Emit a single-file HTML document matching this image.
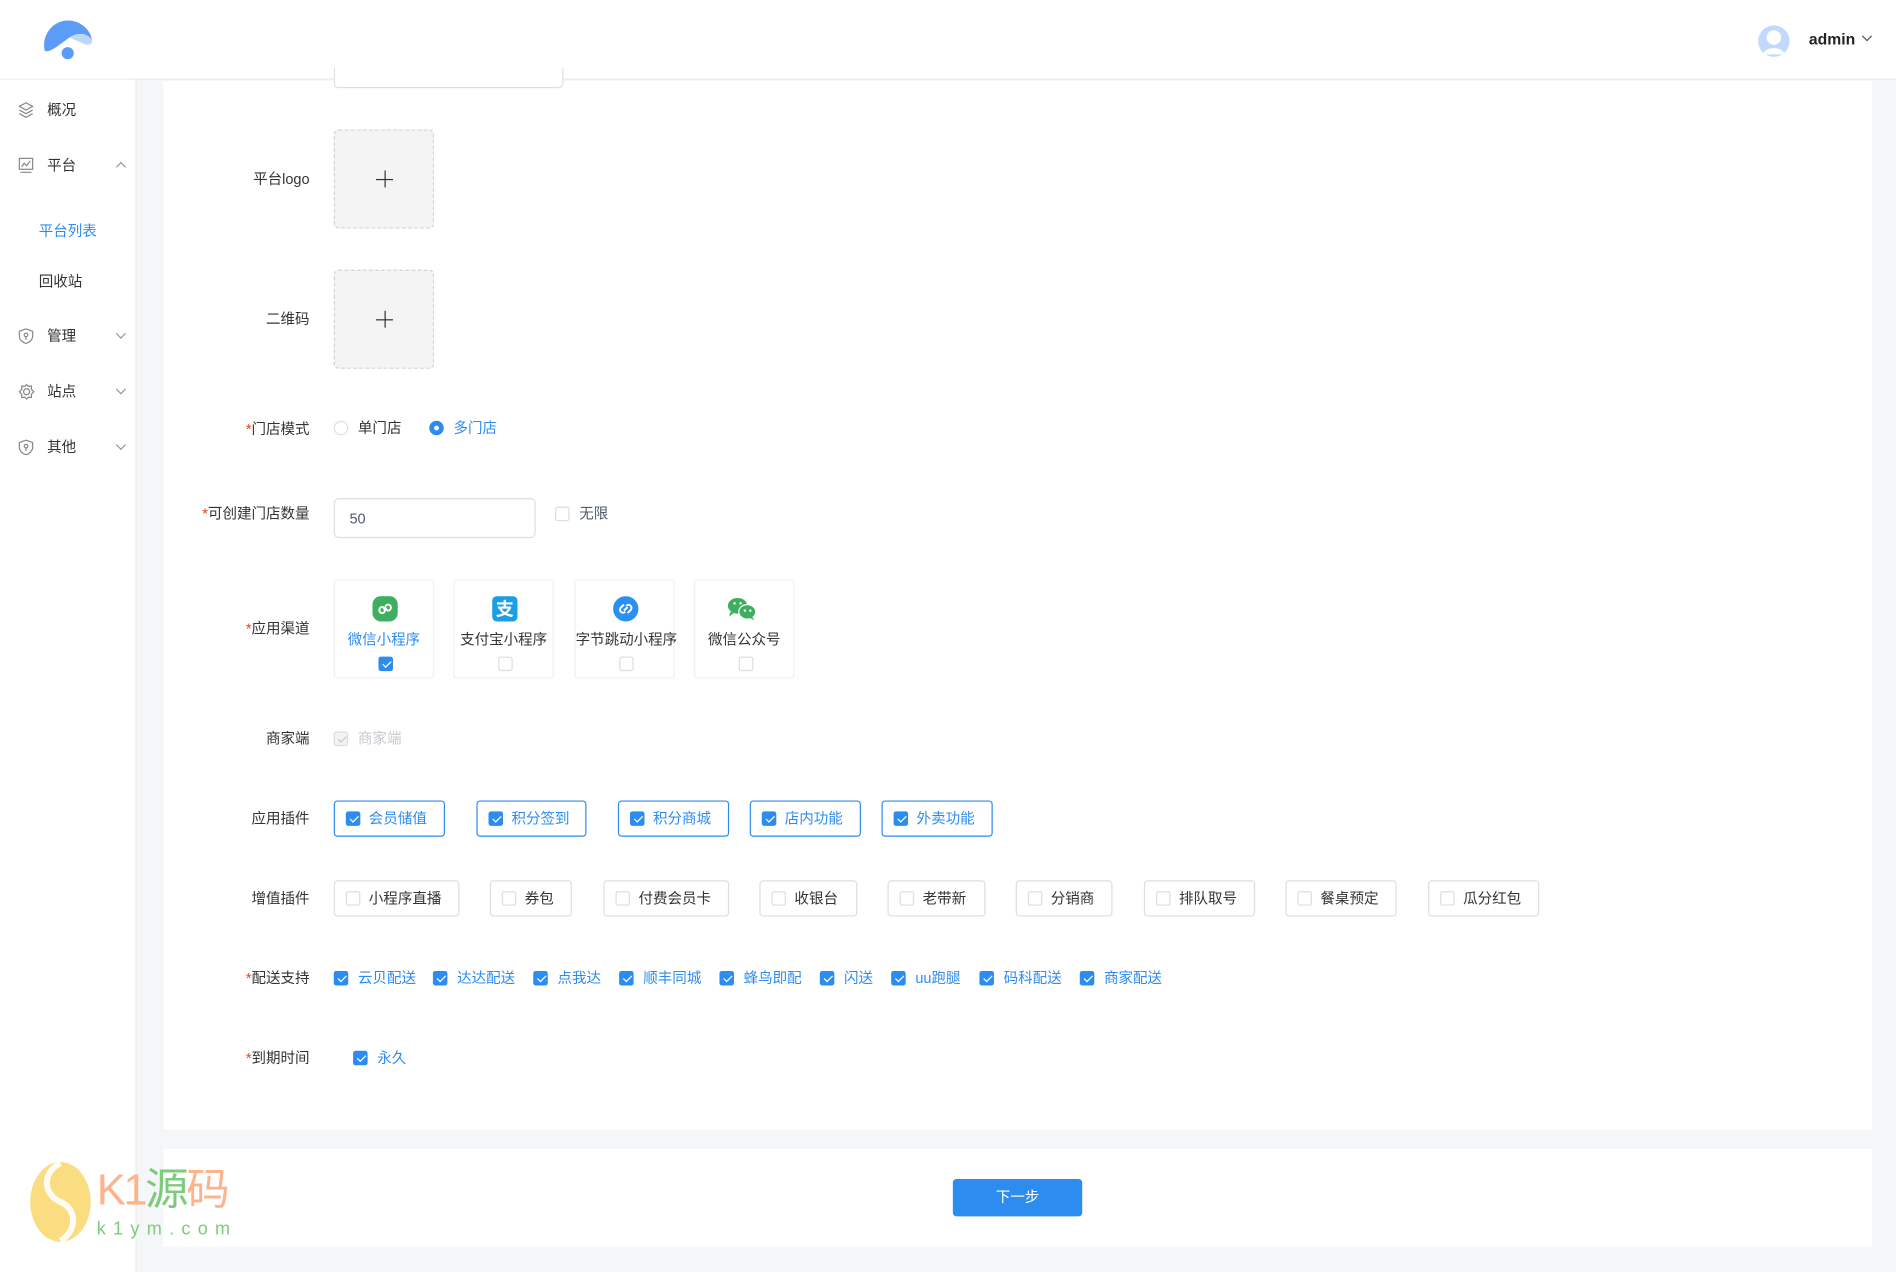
<!DOCTYPE html>
<html><head><meta charset="utf-8">
<style>
*{box-sizing:border-box;margin:0;padding:0}
html,body{width:1896px;height:1272px;overflow:hidden;background:#f5f6f8}
body{font-family:"Liberation Sans","Noto Sans CJK SC",sans-serif;font-size:12px;color:#333}
#w{position:absolute;left:0;top:0;width:1568px;height:1052px;transform:scale(1.20918);transform-origin:0 0;background:#f5f6f8}
.a{position:absolute}
.hdr{left:0;top:0;width:1568px;height:66px;background:#fff;border-bottom:1px solid #e8eaec}
.side{left:0;top:66px;width:113px;height:986px;background:#fff;border-right:1px solid #e8eaec}
.card{left:135px;top:67px;width:1413px;height:867px;background:#fff}
.card2{left:135px;top:950px;width:1413px;height:81px;background:#fff}
.lbl{width:120px;text-align:right;left:136px;line-height:16px}
.lbl b{color:#ed4014;font-weight:normal}
.t{line-height:16px;white-space:nowrap}
.blue{color:#2d8cf0}
.cb{width:12px;height:12px;border:1px solid #dcdee2;border-radius:2px;background:#fff}
.cb.on{background:#2d8cf0;border-color:#2d8cf0}
.cb.on:after{content:"";position:absolute;left:3.5px;top:1px;width:3px;height:6px;border:solid #fff;border-width:0 1px 1px 0;transform:rotate(45deg)}
.cb.dis{background:#f3f3f3;border-color:#dcdee2}
.cb.dis:after{content:"";position:absolute;left:3.5px;top:1px;width:3px;height:6px;border:solid #c5c8ce;border-width:0 1px 1px 0;transform:rotate(45deg)}
.btn{height:30px;border:1px solid #dcdee2;border-radius:3px;background:#fff}
.btn.on{border-color:#2d8cf0}
.btn .cb{left:9px;top:8px}
.btn span{position:absolute;left:28px;top:6px;line-height:16px;white-space:nowrap}
.up{width:83px;height:82px;border:1px dashed #d3d3d3;border-radius:4px;background:#f4f4f4}
.up:before{content:"";position:absolute;left:34px;top:40px;width:14px;height:1px;background:#333}
.up:after{content:"";position:absolute;left:41px;top:33px;width:1px;height:14px;background:#333}
.ch{width:83px;height:82px;border:1px solid #f0f0f0;border-radius:2px}
.ch .ic{position:absolute;left:31px;top:13px;width:21px;height:21px}
.ch .tx{position:absolute;left:0;width:100%;text-align:center;top:41px;line-height:16px;white-space:nowrap}
.ch .cb{left:36px;top:63px}
.nav{left:15px;line-height:16px}
.nav .n{position:absolute;left:24px;top:0;white-space:nowrap}
.arr{position:absolute;left:82px;top:3px;width:6px;height:6px;border:solid #999;border-width:0 1px 1px 0;transform:rotate(45deg)}
.arr.up2{transform:rotate(-135deg);top:6px}
</style></head><body><div id="w">
<div class="a hdr"></div>
<svg class="a" style="left:34px;top:15px" width="46" height="38" viewBox="0 0 46 38">
<path d="M3 27 C0 14 10 2 22 2 C33 2 41 10 42 18 C38 12 30 11 22 17 C15 22 7 29 3 27Z" fill="#5b9cf8"/>
<path d="M24 16 C31 11 39 13 42 18 C43 22 39 23 35 21 C31 19 27 18 24 16Z" fill="#bcd7fd"/>
<circle cx="22" cy="29" r="5" fill="#5b9cf8"/>
</svg>
<svg class="a" style="left:1454px;top:21px" width="26" height="26" viewBox="0 0 26 26"><circle cx="13" cy="13" r="13" fill="#c1d9fd"/><circle cx="13" cy="10" r="6" fill="#fff"/><path d="M4 24 C6 17 20 17 22 24Z" fill="#fff"/></svg>
<div class="a t" style="left:1496px;top:25px;font-size:13px;font-weight:bold;color:#222">admin</div>
<div class="a" style="left:1541px;top:27px;width:6px;height:6px;border:solid #555;border-width:0 1px 1px 0;transform:rotate(45deg)"></div>

<div class="a side"></div>
<div class="a nav" style="top:83px"><svg class="a" style="left:0;top:1px" width="13" height="14" viewBox="0 0 13 14" fill="none" stroke="#888"><path d="M6.5 1 L12 4 L6.5 7 L1 4Z"/><path d="M1 7 L6.5 10 L12 7"/><path d="M1 10 L6.5 13 L12 10"/></svg><span class="n">概况</span></div>
<div class="a nav" style="top:129px"><svg class="a" style="left:0;top:1px" width="13" height="14" viewBox="0 0 13 14" fill="none" stroke="#888"><rect x="1" y="1" width="11" height="9"/><path d="M3 8 L5 5 L7 7 L10 3"/><path d="M2 12.5 H11"/></svg><span class="n">平台</span><i class="arr up2"></i></div>
<div class="a t blue" style="left:32px;top:183px">平台列表</div>
<div class="a t" style="left:32px;top:225px">回收站</div>
<div class="a nav" style="top:270px"><svg class="a" style="left:0;top:1px" width="13" height="14" viewBox="0 0 13 14" fill="none" stroke="#888"><path d="M6.5 1 L12 3 V7 C12 10 9 12.5 6.5 13 C4 12.5 1 10 1 7 V3Z"/><circle cx="6.5" cy="6" r="1.5"/><path d="M6.5 7.5 V10"/></svg><span class="n">管理</span><i class="arr"></i></div>
<div class="a nav" style="top:316px"><svg class="a" style="left:0;top:1px" width="14" height="14" viewBox="0 0 14 14" fill="none" stroke="#888"><circle cx="7" cy="7" r="2.5"/><path d="M7 1 L8.5 2.5 L11 2.3 L11 5 L13 7 L11 9 L11 11.7 L8.5 11.5 L7 13 L5.5 11.5 L3 11.7 L3 9 L1 7 L3 5 L3 2.3 L5.5 2.5Z"/></svg><span class="n">站点</span><i class="arr"></i></div>
<div class="a nav" style="top:362px"><svg class="a" style="left:0;top:1px" width="13" height="14" viewBox="0 0 13 14" fill="none" stroke="#888"><path d="M6.5 1 L12 3 V7 C12 10 9 12.5 6.5 13 C4 12.5 1 10 1 7 V3Z"/><circle cx="6.5" cy="6" r="1.5"/><path d="M6.5 7.5 V10"/></svg><span class="n">其他</span><i class="arr"></i></div>

<div class="a card"></div>
<div class="a card2"></div>
<div class="a" style="left:276px;top:56px;width:190px;height:17px;border:1px solid #dcdee2;border-top:none;border-radius:0 0 4px 4px;background:#fff"></div>

<div class="a lbl" style="top:140px">平台logo</div>
<div class="a up" style="left:276px;top:107px"></div>
<div class="a lbl" style="top:256px">二维码</div>
<div class="a up" style="left:276px;top:223px"></div>

<div class="a lbl" style="top:347px"><b>*</b>门店模式</div>
<div class="a" style="left:276px;top:348px;width:12px;height:12px;border:1px solid #dcdee2;border-radius:50%"></div>
<div class="a t" style="left:296px;top:346px">单门店</div>
<div class="a" style="left:355px;top:348px;width:12px;height:12px;border:4px solid #2d8cf0;border-radius:50%;background:#fff"></div>
<div class="a t blue" style="left:375px;top:346px">多门店</div>

<div class="a lbl" style="top:417px"><b>*</b>可创建门店数量</div>
<div class="a" style="left:276px;top:412px;width:167px;height:33px;border:1px solid #dcdee2;border-radius:4px;background:#fff"></div>
<div class="a t" style="left:289px;top:421px;color:#515a6e">50</div>
<div class="a cb" style="left:459px;top:419px"></div>
<div class="a t" style="left:479px;top:417px;color:#515a6e">无限</div>

<div class="a lbl" style="top:512px"><b>*</b>应用渠道</div>
<div class="a ch" style="left:276px;top:479px"><svg class="ic" viewBox="0 0 21 21"><rect width="21" height="21" rx="7" fill="#3eae5f"/><path d="M8 14 C5 14 5 9 8 9 M13 7 C16 7 16 12 13 12 M8 9 C10 9 10 12 10.5 12 M13 12 C11 12 11 9 10.5 9 M8 14 C10 14 10.5 12 10.5 11 M13 7 C11 7 10.5 9 10.5 10" stroke="#fff" stroke-width="1.6" fill="none"/></svg><div class="tx blue">微信小程序</div><div class="a cb on"></div></div>
<div class="a ch" style="left:375px;top:479px"><svg class="ic" viewBox="0 0 21 21"><rect width="21" height="21" rx="4" fill="#1a9ee8"/><text x="10.5" y="16" font-size="15" text-anchor="middle" fill="#fff" font-family="Noto Sans CJK SC" font-weight="bold">支</text></svg><div class="tx">支付宝小程序</div><div class="a cb"></div></div>
<div class="a ch" style="left:475px;top:479px"><svg class="ic" viewBox="0 0 21 21"><circle cx="10.5" cy="10.5" r="10.5" fill="#2c8ff3"/><path d="M9 7 L6.5 9.5 C5.5 10.5 5.5 12 6.5 13 C7.5 14 9 14 10 13 M12 14 L14.5 11.5 C15.5 10.5 15.5 9 14.5 8 C13.5 7 12 7 11 8 M9 12 L12 9" stroke="#fff" stroke-width="1.6" fill="none"/></svg><div class="tx">字节跳动小程序</div><div class="a cb"></div></div>
<div class="a ch" style="left:574px;top:479px"><svg class="ic" viewBox="0 0 26 21" style="left:26px;width:26px"><ellipse cx="9" cy="8" rx="8" ry="6.5" fill="#3eae5f"/><path d="M3 13 L2 17 L6 14Z" fill="#3eae5f"/><ellipse cx="17" cy="13" rx="7" ry="6" fill="#3eae5f" stroke="#fff" stroke-width="1"/><path d="M21 17 L23 20 L19 18Z" fill="#3eae5f"/><circle cx="6.5" cy="6" r="1" fill="#fff"/><circle cx="11.5" cy="6" r="1" fill="#fff"/><circle cx="15" cy="12" r="1" fill="#fff"/><circle cx="19.5" cy="12" r="1" fill="#fff"/></svg><div class="tx">微信公众号</div><div class="a cb"></div></div>

<div class="a lbl" style="top:603px">商家端</div>
<div class="a cb dis" style="left:276px;top:605px"></div>
<div class="a t" style="left:296px;top:603px;color:#c5c8ce">商家端</div>

<div class="a lbl" style="top:669px">应用插件</div>
<div class="a btn on" style="left:276px;top:662px;width:92px"><i class="a cb on"></i><span class="blue">会员储值</span></div>
<div class="a btn on" style="left:394px;top:662px;width:91px"><i class="a cb on"></i><span class="blue">积分签到</span></div>
<div class="a btn on" style="left:511px;top:662px;width:92px"><i class="a cb on"></i><span class="blue">积分商城</span></div>
<div class="a btn on" style="left:620px;top:662px;width:92px"><i class="a cb on"></i><span class="blue">店内功能</span></div>
<div class="a btn on" style="left:729px;top:662px;width:92px"><i class="a cb on"></i><span class="blue">外卖功能</span></div>

<div class="a lbl" style="top:735px">增值插件</div>
<div class="a btn" style="left:276px;top:728px;width:104px"><i class="a cb"></i><span>小程序直播</span></div>
<div class="a btn" style="left:405px;top:728px;width:68px"><i class="a cb"></i><span>券包</span></div>
<div class="a btn" style="left:499px;top:728px;width:104px"><i class="a cb"></i><span>付费会员卡</span></div>
<div class="a btn" style="left:628px;top:728px;width:81px"><i class="a cb"></i><span>收银台</span></div>
<div class="a btn" style="left:734px;top:728px;width:81px"><i class="a cb"></i><span>老带新</span></div>
<div class="a btn" style="left:840px;top:728px;width:80px"><i class="a cb"></i><span>分销商</span></div>
<div class="a btn" style="left:946px;top:728px;width:92px"><i class="a cb"></i><span>排队取号</span></div>
<div class="a btn" style="left:1063px;top:728px;width:92px"><i class="a cb"></i><span>餐桌预定</span></div>
<div class="a btn" style="left:1181px;top:728px;width:92px"><i class="a cb"></i><span>瓜分红包</span></div>

<div class="a lbl" style="top:801px"><b>*</b>配送支持</div>
<div class="a cb on" style="left:276px;top:803px"></div><div class="a t blue" style="left:296px;top:801px">云贝配送</div>
<div class="a cb on" style="left:358px;top:803px"></div><div class="a t blue" style="left:378px;top:801px">达达配送</div>
<div class="a cb on" style="left:441px;top:803px"></div><div class="a t blue" style="left:461px;top:801px">点我达</div>
<div class="a cb on" style="left:512px;top:803px"></div><div class="a t blue" style="left:532px;top:801px">顺丰同城</div>
<div class="a cb on" style="left:595px;top:803px"></div><div class="a t blue" style="left:615px;top:801px">蜂鸟即配</div>
<div class="a cb on" style="left:678px;top:803px"></div><div class="a t blue" style="left:698px;top:801px">闪送</div>
<div class="a cb on" style="left:737px;top:803px"></div><div class="a t blue" style="left:757px;top:801px">uu跑腿</div>
<div class="a cb on" style="left:810px;top:803px"></div><div class="a t blue" style="left:830px;top:801px">码科配送</div>
<div class="a cb on" style="left:893px;top:803px"></div><div class="a t blue" style="left:913px;top:801px">商家配送</div>

<div class="a lbl" style="top:867px"><b>*</b>到期时间</div>
<div class="a cb on" style="left:292px;top:869px"></div><div class="a t blue" style="left:312px;top:867px">永久</div>

<div class="a" style="left:788px;top:975px;width:107px;height:31px;background:#2d8cf0;border-radius:3px;color:#fff;text-align:center;line-height:31px">下一步</div>

<svg class="a" style="left:24px;top:960px" width="52" height="68" viewBox="0 0 52 68"><ellipse cx="26" cy="34" rx="25" ry="33" fill="#f9d66b" opacity=".85"/><path d="M26 2 C10 10 12 28 26 34 C40 40 40 58 26 66" stroke="#fff" stroke-width="5" fill="none" opacity=".9"/></svg>
<div class="a t" style="left:80px;top:964px;font-size:36px;line-height:40px;color:#ffb38a;letter-spacing:-2px">K1<span style="color:#7ccc7c">源</span>码</div>
<div class="a t" style="left:80px;top:1009px;font-size:15px;color:#7ccc7c;letter-spacing:6px">k1ym.com</div>
</div></body></html>
